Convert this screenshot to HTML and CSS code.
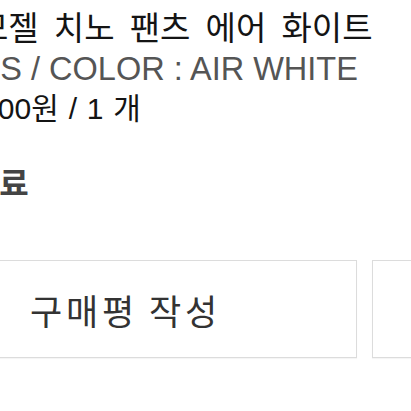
FILE: index.html
```html
<!DOCTYPE html>
<html lang="ko">
<head>
<meta charset="utf-8">
<title>주문 상품</title>
<link rel="stylesheet" href="styles.css">
</head>
<body>
<div class="order">
  <div class="item">
    <div class="item-name">남성 모젤 치노 팬츠 에어 화이트</div>
    <div class="item-option">SIZE : S / COLOR : AIR WHITE</div>
    <div class="item-price">총 39,000원 / 1 개</div>
    <div class="item-status">배송 완료</div>
  </div>
  <div class="actions">
    <button class="btn">구매평 작성</button>
    <button class="btn">배송 조회</button>
  </div>
</div>
</body>
</html>
```

FILE: styles.css
```css
html, body {
  margin: 0;
  padding: 0;
  background: #ffffff;
}
body {
  width: 411px;
  height: 411px;
  overflow: hidden;
  font-family: "Liberation Sans", "Noto Sans CJK KR", sans-serif;
}
.order {
  display: flex;
  flex-direction: column;
  padding-top: 9px;
}
.item {
  display: flex;
  flex-direction: column;
  margin-left: -98px;
  white-space: nowrap;
}
.item-name {
  font-size: 33px;
  line-height: 40px;
  word-spacing: 6px;
  color: #141414;
}
.item-option {
  font-size: 32.5px;
  line-height: 40px;
  margin-left: -1px;
  color: #555555;
}
.item-price {
  font-size: 30px;
  line-height: 40px;
  word-spacing: 1.5px;
  color: #141414;
}
.item-status {
  margin-top: 35px;
  font-size: 32px;
  line-height: 40px;
  font-weight: bold;
  color: #444444;
}
.actions {
  display: flex;
  gap: 15px;
  margin-top: 56px;
  margin-left: -106px;
}
.btn {
  flex: 0 0 463px;
  height: 98px;
  box-sizing: border-box;
  border: 1px solid #dcdcdc;
  background: #ffffff;
  box-shadow: 0 1px 1px rgba(0, 0, 0, 0.04);
  font-family: "Liberation Sans", "Noto Sans CJK KR", sans-serif;
  font-size: 35px;
  letter-spacing: 3.8px;
  word-spacing: -2.5px;
  color: #333333;
  padding: 0;
  white-space: nowrap;
}
```
